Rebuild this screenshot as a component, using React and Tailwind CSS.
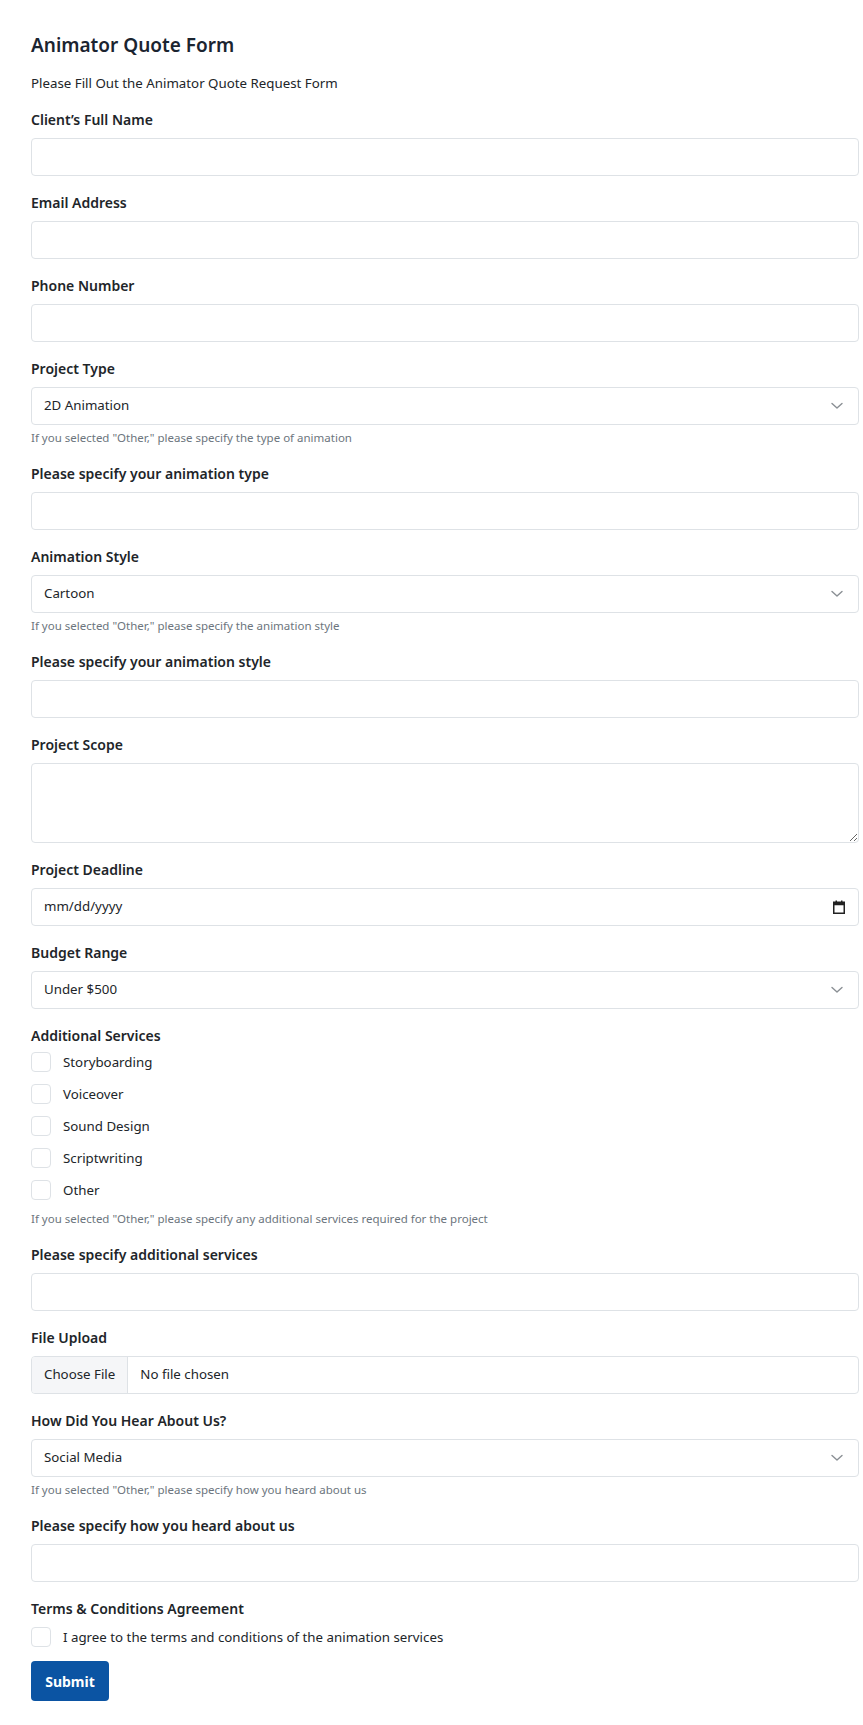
// Animator quote request form
function Label({ children, className = "" }) {
  return (
    <label className={`block text-[14px] leading-[21px] font-semibold text-[#212529] mb-2 ${className}`}>
      {children}
    </label>
  );
}

function Help({ children, className = "mt-1" }) {
  return <p className={`${className} text-[11.5px] leading-[18px] text-[#6c757d]`}>{children}</p>;
}

function TextInput() {
  return (
    <input
      type="text"
      className="block w-full h-[38px] px-3 text-[13.3px] text-[#212529] bg-white border border-[#dee2e6] rounded-[4px] outline-none"
    />
  );
}

function Chevron() {
  return (
    <svg width="12" height="8" viewBox="0 0 12 8" className="absolute right-[16px] top-1/2 -translate-y-1/2 pointer-events-none">
      <polyline points="1,1.5 6,6 11,1.5" fill="none" stroke="#8a8f94" strokeWidth="1.4" strokeLinecap="round" strokeLinejoin="round" />
    </svg>
  );
}

function Select({ options }) {
  return (
    <div className="relative">
      <select className="block w-full h-[38px] pl-3 pr-10 text-[13.3px] text-[#212529] bg-white border border-[#dee2e6] rounded-[4px] appearance-none outline-none">
        {options.map((o) => (
          <option key={o}>{o}</option>
        ))}
      </select>
      <Chevron />
    </div>
  );
}

function Check({ children }) {
  return (
    <div className="flex items-center h-[24px]">
      <span className="w-[20px] h-[20px] border border-[#dee2e6] rounded-[4px] bg-white shrink-0" />
      <span className="ml-[12px] text-[13.3px] leading-[21px] text-[#212529]">{children}</span>
    </div>
  );
}

export default function App() {
  return (
    <main className="min-h-screen bg-white pt-[33px] pb-[22px] pl-[31px] pr-[4px] font-['Noto_Sans',sans-serif] text-[#212529]">
      <h1 className="text-[19px] leading-[24px] font-semibold text-[#1b2430] mb-4">Animator Quote Form</h1>
      <p className="text-[13.3px] leading-[21px] mb-[15px]">Please Fill Out the Animator Quote Request Form</p>

      <div className="mb-4">
        <Label>Client’s Full Name</Label>
        <TextInput />
      </div>

      <div className="mb-4">
        <Label>Email Address</Label>
        <TextInput />
      </div>

      <div className="mb-4">
        <Label>Phone Number</Label>
        <TextInput />
      </div>

      <div className="mb-4">
        <Label>Project Type</Label>
        <Select options={["2D Animation", "3D Animation", "Motion Graphics", "Other"]} />
        <Help>If you selected "Other," please specify the type of animation</Help>
      </div>

      <div className="mb-4">
        <Label>Please specify your animation type</Label>
        <TextInput />
      </div>

      <div className="mb-4">
        <Label>Animation Style</Label>
        <Select options={["Cartoon", "Realistic", "Minimalist", "Other"]} />
        <Help>If you selected "Other," please specify the animation style</Help>
      </div>

      <div className="mb-4">
        <Label>Please specify your animation style</Label>
        <TextInput />
      </div>

      <div className="mb-4">
        <Label>Project Scope</Label>
        <textarea className="block w-full h-[80px] px-3 py-[6px] text-[13.3px] bg-white border border-[#dee2e6] rounded-[4px] outline-none" />
      </div>

      <div className="mb-4">
        <Label>Project Deadline</Label>
        <div className="flex items-center justify-between h-[38px] px-3 border border-[#dee2e6] rounded-[4px] bg-white">
          <span className="text-[13.3px] text-[#212529]">mm/dd/yyyy</span>
          <svg width="12" height="14" viewBox="0 0 12 14" className="mr-[1px]">
            <rect x="2.5" y="0.5" width="1.5" height="3" fill="#222" />
            <rect x="8" y="0.5" width="1.5" height="3" fill="#222" />
            <rect x="0.75" y="2.25" width="10.5" height="11" fill="none" stroke="#222" strokeWidth="1.5" />
            <rect x="0.75" y="2.25" width="10.5" height="3" fill="#222" />
          </svg>
        </div>
      </div>

      <div className="mb-4">
        <Label>Budget Range</Label>
        <Select options={["Under $500", "$500 - $1,000", "$1,000 - $5,000", "Over $5,000"]} />
      </div>

      <div className="mb-4">
        <Label className="!mb-1">Additional Services</Label>
        <div className="flex flex-col gap-2">
          <Check>Storyboarding</Check>
          <Check>Voiceover</Check>
          <Check>Sound Design</Check>
          <Check>Scriptwriting</Check>
          <Check>Other</Check>
        </div>
        <Help className="mt-[8px]">If you selected "Other," please specify any additional services required for the project</Help>
      </div>

      <div className="mb-4">
        <Label>Please specify additional services</Label>
        <TextInput />
      </div>

      <div className="mb-4">
        <Label>File Upload</Label>
        <div className="flex h-[38px] border border-[#dee2e6] rounded-[4px] overflow-hidden bg-white text-[13.3px]">
          <span className="flex items-center px-3 bg-[#f5f6f8] border-r border-[#dee2e6]">Choose File</span>
          <span className="flex items-center px-3">No file chosen</span>
        </div>
      </div>

      <div className="mb-4">
        <Label>How Did You Hear About Us?</Label>
        <Select options={["Social Media", "Search Engine", "Referral", "Other"]} />
        <Help>If you selected "Other," please specify how you heard about us</Help>
      </div>

      <div className="mb-4">
        <Label>Please specify how you heard about us</Label>
        <TextInput />
      </div>

      <div>
        <Label className="!mb-[6px]">Terms &amp; Conditions Agreement</Label>
        <Check>I agree to the terms and conditions of the animation services</Check>
      </div>

      <button className="mt-[12px] h-[40px] w-[78px] rounded-[4px] bg-[#0b54a3] text-white text-[14px] font-bold">
        Submit
      </button>
    </main>
  );
}
